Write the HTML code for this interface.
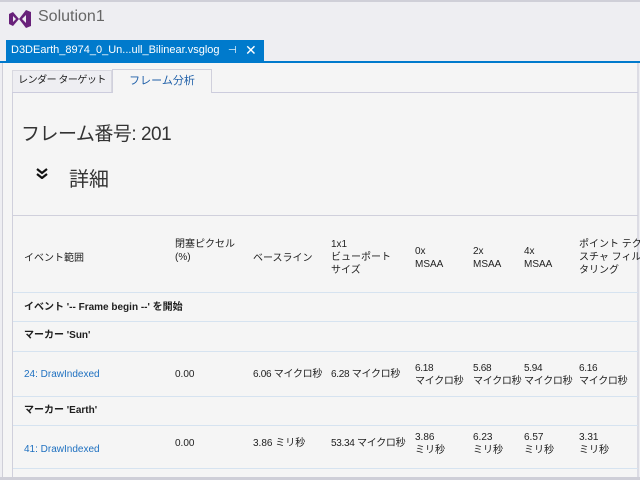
<!DOCTYPE html>
<html><head><meta charset="utf-8"><style>
*{margin:0;padding:0;box-sizing:border-box}
body{width:640px;height:480px;overflow:hidden;background:#eeeef2;font-family:"Liberation Sans","Noto Sans CJK JP",sans-serif;position:relative;color:#1e1e1e}
.a{position:absolute}
.t{font-size:10px;position:absolute;white-space:nowrap;line-height:13px}
.l{position:absolute;left:13px;right:2px;height:1px;background:#d6e3f0}
</style></head><body>
<div class="a" style="left:0;top:0;width:640px;height:2px;background:#cfcfd8"></div>
<svg class="a" style="left:9px;top:9px" width="22" height="20" viewBox="0 0 22 20"><path d="M0 5 L4 3 L10 10 L4 17 L0 15 Z M4 7 L7 10 L4 13 Z" fill="#68217a" fill-rule="evenodd"/><path d="M10 10 L17 1 L22 3 L22 17 L17 19 Z M17 6 L17 14 L13 10 Z" fill="#68217a" fill-rule="evenodd"/></svg>
<div class="a" style="left:38px;top:8px;font-size:16px;color:#666">Solution1</div>
<div class="a" style="left:6px;top:40px;width:258px;height:22px;background:#007acc;color:#fff;font-size:11px;line-height:21px;padding-left:5px;white-space:nowrap">D3DEarth_8974_0_Un...ull_Bilinear.vsglog<span style="position:absolute;left:222px;font-size:10px">⊣</span><span style="position:absolute;left:239px;font-size:14px">✕</span></div>
<div class="a" style="left:0;top:61px;width:640px;height:2px;background:#007acc"></div>
<div class="a" style="left:2px;top:63px;width:1px;height:417px;background:#cfcfd8"></div>
<div class="a" style="left:637px;top:63px;width:2px;height:417px;background:#dcdce4"></div>
<div class="a" style="left:3px;top:63px;width:634px;height:417px;background:#f5f5f5"></div>
<div class="a" style="left:12px;top:70px;width:100px;height:22px;background:#eeeef2;border:1px solid #d8d8e0;border-bottom:none;font-size:10px;line-height:20px;text-align:center;white-space:nowrap;letter-spacing:-0.5px">レンダー ターゲット</div>
<div class="a" style="left:112px;top:69px;width:100px;height:24px;background:#f5f5f5;border:1px solid #d0d0dc;border-bottom:none;font-size:11px;line-height:22px;text-align:center;color:#1e5fa8">フレーム分析</div>
<div class="a" style="left:12px;top:92px;width:100px;height:1px;background:#ccccdd"></div>
<div class="a" style="left:212px;top:92px;width:426px;height:1px;background:#ccccdd"></div>
<div class="a" style="left:12px;top:93px;width:1px;height:387px;background:#d0d0dc"></div>
<div class="a" style="left:21px;top:119px;font-size:19px;color:#333;letter-spacing:-0.5px">フレーム番号: 201</div>
<svg class="a" style="left:36px;top:168px" width="12" height="11" viewBox="0 0 12 11"><path d="M1 1 L6 5 L11 1 M1 6 L6 10 L11 6" stroke="#111" stroke-width="2.2" fill="none"/></svg>
<div class="a" style="left:69px;top:163px;font-size:20px;color:#333">詳細</div>
<div class="a" style="left:13px;top:215px;width:625px;height:1px;background:#d0d0dc"></div>
<div class="t" style="left:24px;top:252px">イベント範囲</div>
<div class="t" style="left:175px;top:238px">閉塞ピクセル<br>(%)</div>
<div class="t" style="left:253px;top:252px">ベースライン</div>
<div class="t" style="left:331px;top:238px">1x1<br>ビューポート<br>サイズ</div>
<div class="t" style="left:415px;top:245px">0x<br>MSAA</div>
<div class="t" style="left:473px;top:245px">2x<br>MSAA</div>
<div class="t" style="left:524px;top:245px">4x<br>MSAA</div>
<div class="t" style="left:579px;top:238px">ポイント テク<br>スチャ フィル<br>タリング</div>
<div class="l" style="top:292px"></div>
<div class="t" style="left:24px;top:301px;font-weight:bold">イベント '-- Frame begin --' を開始</div>
<div class="l" style="top:321px"></div>
<div class="t" style="left:24px;top:329px;font-weight:bold">マーカー 'Sun'</div>
<div class="l" style="top:351px"></div>
<div class="t" style="left:24px;top:368px;color:#1e70c0">24: DrawIndexed</div>
<div class="t" style="left:175px;top:368px">0.00</div>
<div class="t" style="left:253px;top:368px;letter-spacing:-0.3px">6.06 マイクロ秒</div>
<div class="t" style="left:331px;top:368px;letter-spacing:-0.3px">6.28 マイクロ秒</div>
<div class="t" style="left:415px;top:362px;letter-spacing:-0.3px">6.18<br>マイクロ秒</div>
<div class="t" style="left:473px;top:362px;letter-spacing:-0.3px">5.68<br>マイクロ秒</div>
<div class="t" style="left:524px;top:362px;letter-spacing:-0.3px">5.94<br>マイクロ秒</div>
<div class="t" style="left:579px;top:362px;letter-spacing:-0.3px">6.16<br>マイクロ秒</div>
<div class="l" style="top:396px"></div>
<div class="t" style="left:24px;top:404px;font-weight:bold">マーカー 'Earth'</div>
<div class="l" style="top:425px"></div>
<div class="t" style="left:24px;top:443px;color:#1e70c0">41: DrawIndexed</div>
<div class="t" style="left:175px;top:437px">0.00</div>
<div class="t" style="left:253px;top:437px">3.86 ミリ秒</div>
<div class="t" style="left:331px;top:437px;letter-spacing:-0.3px">53.34 マイクロ秒</div>
<div class="t" style="left:415px;top:431px">3.86<br>ミリ秒</div>
<div class="t" style="left:473px;top:431px">6.23<br>ミリ秒</div>
<div class="t" style="left:524px;top:431px">6.57<br>ミリ秒</div>
<div class="t" style="left:579px;top:431px">3.31<br>ミリ秒</div>
<div class="l" style="top:468px"></div>
<div class="a" style="left:0;top:477px;width:640px;height:3px;background:#cfcfd8"></div>
</body></html>
